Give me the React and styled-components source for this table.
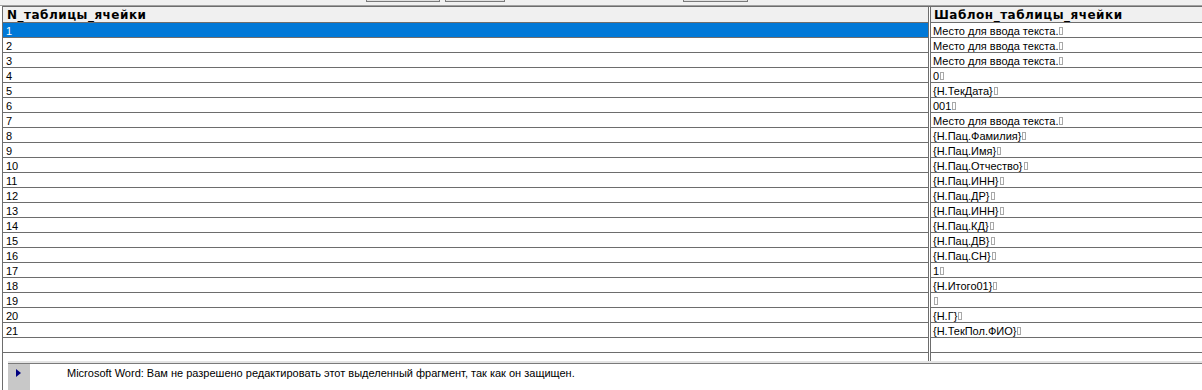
import React from 'react'
import styled, { createGlobalStyle } from 'styled-components'

const GlobalStyle = createGlobalStyle`
    html, body {
        margin: 0;
        padding: 0;
        background: #ffffff;
        overflow: hidden;
    }
    body {
        font-family: "Liberation Sans", Arial, sans-serif;
        font-size: 11px;
        color: #000;
    }
`;

const Window = styled.div`
    width: 1202px;
    height: 390px;
    display: flex;
    flex-direction: column;
    overflow: hidden;
`;

const Toolbar = styled.div`
    height: 5px;
    background: #f0f0f0;
    border-bottom: 1px solid #a0a0a0;
    display: flex;
    align-items: flex-start;
    padding-left: 366px;
    gap: 5px;
`;

const ToolButton = styled.div`
    width: ${p => p.w}px;
    height: 1px;
    margin-left: ${p => p.offset || 0}px;
    background: #e1e1e1;
    border: 1px solid #7a7a7a;
    border-top: none;
`;

const Body = styled.div`
    flex: 1;
    display: flex;
    flex-direction: column;
    margin-left: 2px;
    border-left: 1px solid #6d6d6d;
`;

const Grid = styled.div`
    height: 354px;
    overflow: hidden;
    border-top: 1px solid #6d6d6d;
    display: grid;
    grid-template-columns: 926px 1fr;
    grid-template-rows: 16px;
    grid-auto-rows: 15px;
    column-gap: 1px;
    background: #ffffff;
`;

const HeadCell = styled.div`
    background: #f0f0f0;
    font-family: "DejaVu Sans", Verdana, sans-serif;
    font-weight: bold;
    font-size: 12px;
    letter-spacing: 0.5px;
    line-height: 16px;
    height: 15px;
    padding-left: ${p => (p.second ? 3 : 4)}px;
    border-bottom: 1px solid #6d6d6d;
    border-right: ${p => (p.second ? 'none' : '1px solid #6d6d6d')};
    border-left: ${p => (p.second ? '1px solid #6d6d6d' : 'none')};
    white-space: nowrap;
    overflow: hidden;
`;

const Cell = styled.div`
    box-sizing: content-box;
    height: 13px;
    padding-top: 1px;
    line-height: 14px;
    padding-left: ${p => (p.second ? 2 : 3)}px;
    background: ${p => (p.selected ? '#0078d7' : '#ffffff')};
    color: ${p => (p.selected ? '#ffffff' : '#000000')};
    border-bottom: 1px solid #6d6d6d;
    border-right: ${p => (p.second ? 'none' : '1px solid #6d6d6d')};
    border-left: ${p => (p.second ? '1px solid #6d6d6d' : 'none')};
    white-space: pre;
    overflow: hidden;
    display: flex;
    align-items: center;
`;

const CellMark = styled.span`
    display: inline-block;
    width: 2px;
    height: 6px;
    margin-left: 1px;
    border: 1px solid #a8a8a8;
    background: #fff;
`;

const StatusBar = styled.div`
    flex: 1;
    margin-left: 5px;
    border-top: 2px solid #e4e4e4;
    display: flex;
`;

const StatusInner = styled.div`
    flex: 1;
    border-top: 1px solid #7a7a7a;
    display: flex;
`;

const StatusIcon = styled.div`
    width: 22px;
    background: #c8c8c8;
    display: flex;
    justify-content: center;
    padding-top: 5px;
    box-sizing: border-box;
    svg {
        margin-left: -2px;
    }
`;

const StatusText = styled.div`
    padding-left: 37px;
    padding-top: 2px;
    line-height: 14px;
    font-size: 11px;
    white-space: nowrap;
`;

const rows = [
    'Место для ввода текста.',
    'Место для ввода текста.',
    'Место для ввода текста.',
    '0',
    '{Н.ТекДата}',
    '001',
    'Место для ввода текста.',
    '{Н.Пац.Фамилия}',
    '{Н.Пац.Имя}',
    '{Н.Пац.Отчество}',
    '{Н.Пац.ИНН}',
    '{Н.Пац.ДР}',
    '{Н.Пац.ИНН}',
    '{Н.Пац.КД}',
    '{Н.Пац.ДВ}',
    '{Н.Пац.СН}',
    '1',
    '{Н.Итого01}',
    ' ',
    '{Н.Г}',
    '{Н.ТекПол.ФИО}',
];

export default function App() {
    return (
        <Window>
            <GlobalStyle />
            <Toolbar>
                <ToolButton w={72} />
                <ToolButton w={58} />
                <ToolButton w={63} offset={173} />
            </Toolbar>
            <Body>
                <Grid>
                    <HeadCell>N_таблицы_ячейки</HeadCell>
                    <HeadCell second>Шаблон_таблицы_ячейки</HeadCell>
                    {rows.map((text, i) => (
                        <React.Fragment key={i}>
                            <Cell selected={i === 0}>{i + 1}</Cell>
                            <Cell second>
                                {text}
                                <CellMark />
                            </Cell>
                        </React.Fragment>
                    ))}
                    <Cell />
                    <Cell second />
                    <Cell />
                    <Cell second />
                </Grid>
                <StatusBar>
                    <StatusInner>
                        <StatusIcon>
                            <svg width="5" height="8" viewBox="0 0 5 8">
                                <path d="M0 0 L5 4 L0 8 Z" fill="#000080" />
                            </svg>
                        </StatusIcon>
                        <StatusText>
                            Microsoft Word: Вам не разрешено редактировать этот выделенный фрагмент, так как он защищен.
                        </StatusText>
                    </StatusInner>
                </StatusBar>
            </Body>
        </Window>
    )
}
